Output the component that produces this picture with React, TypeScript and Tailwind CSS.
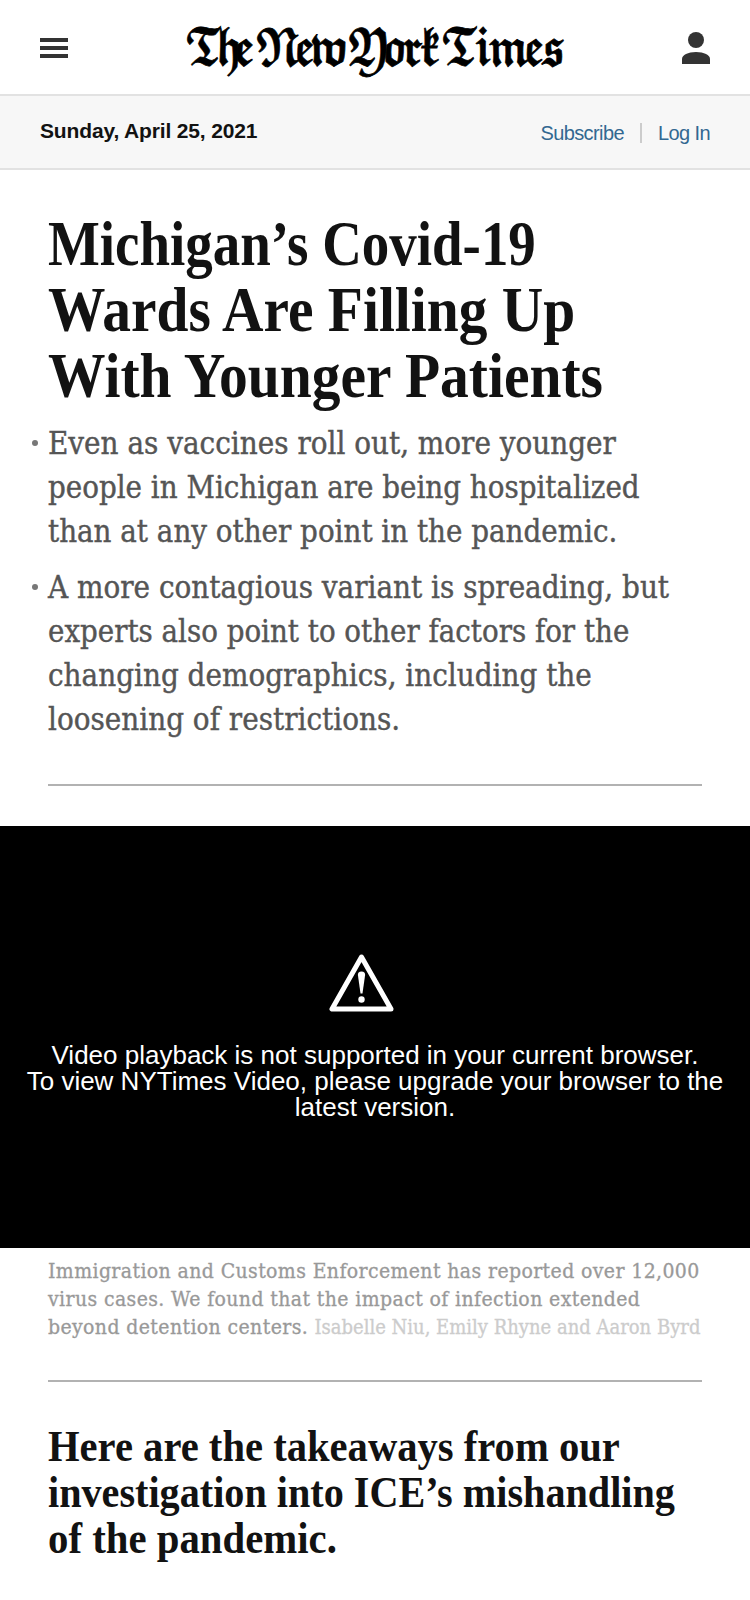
import type { ReactNode } from 'react';

function Line({ className = '', children }: { className?: string; children: ReactNode }) {
  return <span className={`block w-max origin-left whitespace-nowrap ${className}`}>{children}</span>;
}

function Masthead() {
  return (
    <header className="flex h-24 items-center justify-between border-b-2 border-[#e2e2e2] px-10 pt-0.5">
      <button aria-label="Sections" className="flex w-7 flex-col gap-1">
        <span className="h-1 bg-[#333]" />
        <span className="h-1 bg-[#333]" />
        <span className="h-1 bg-[#333]" />
      </button>
      <h1
        aria-label="The New York Times"
        className="flex w-[378px] -translate-x-[3px] scale-x-[0.8] justify-center pt-1.5 whitespace-nowrap font-['DejaVu_Math_TeX_Gyre','DejaVu_Serif','DejaVu_Sans',serif] text-[48px] leading-none tracking-[-8.5px] text-black [-webkit-text-stroke:0.8px_black]"
      >
        𝕿𝖍𝖊 𝕹𝖊𝖜 𝖄𝖔𝖗𝖐 𝕿𝖎𝖒𝖊𝖘
      </h1>
      <svg aria-label="Account" viewBox="0 0 28 32" className="h-8 w-7 fill-[#333]">
        <circle cx="14" cy="8" r="8" />
        <path d="M0 32v-5c0-4 6-7 14-7s14 3 14 7v5z" />
      </svg>
    </header>
  );
}

export default function App() {
  return (
    <div className="h-[1600px] w-[750px] overflow-hidden bg-white font-['Liberation_Serif',serif] text-[#121212]">
      <Masthead />
      <div className="flex h-[74px] items-center justify-between border-b-2 border-[#e2e2e2] bg-[#f7f7f7] px-10 font-['Liberation_Sans',sans-serif]">
        <time className="pb-0.5 text-[21px] font-bold tracking-[-0.15px]">Sunday, April 25, 2021</time>
        <nav className="flex items-center pt-0.5 text-[20px] text-[#326891]">
          <a className="tracking-[-0.6px]">Subscribe</a>
          <span className="mr-4 ml-4 h-5 w-0.5 bg-[#ccc]" />
          <a className="tracking-[-0.6px]">Log In</a>
        </nav>
      </div>

      <main>
        <article className="px-12 pt-[41px]">
          <h2 className="text-[63px] leading-[66px] font-bold">
            <Line className="scale-x-[0.872]">Michigan’s Covid-19</Line>
            <Line className="scale-x-[0.912]">Wards Are Filling Up</Line>
            <Line className="scale-x-[0.913]">With Younger Patients</Line>
          </h2>
          <ul className="mt-3 flex flex-col gap-3 font-['DejaVu_Serif_Condensed','DejaVu_Serif',serif] text-[31px] leading-[44px] text-[#555] [-webkit-text-stroke:0.4px_#555]">
            <li className="relative">
              <span className="absolute top-[19px] -left-4 size-1.5 rounded-full bg-[#777]" />
              <Line>Even as vaccines roll out, more younger</Line>
              <Line className="scale-x-[0.996]">people in Michigan are being hospitalized</Line>
              <Line className="scale-x-[0.996]">than at any other point in the pandemic.</Line>
            </li>
            <li className="relative">
              <span className="absolute top-[19px] -left-4 size-1.5 rounded-full bg-[#777]" />
              <Line>A more contagious variant is spreading, but</Line>
              <Line className="scale-x-[0.994]">experts also point to other factors for the</Line>
              <Line>changing demographics, including the</Line>
              <Line>loosening of restrictions.</Line>
            </li>
          </ul>
          <hr className="mt-[43px] border-t-2 border-[#b2b2b2]" />
        </article>

        <section className="mt-10 flex h-[422px] flex-col items-center bg-black pt-[127px] text-center font-['Liberation_Sans',sans-serif] text-[26px] leading-[26px] text-white">
          <svg viewBox="0 0 66 60" className="mr-7 h-[60px] w-[66px]">
            <path d="M33.5 4 4 56h59z" fill="none" stroke="white" strokeWidth="5" strokeLinejoin="round" />
            <path d="M33.5 18.5c-2.6 0-3.8 1.6-3.6 3.6l2.6 18.4h2l2.6-18.4c.2-2-1-3.6-3.6-3.6z" fill="white" />
            <circle cx="33.5" cy="46.5" r="3.2" fill="white" />
          </svg>
          <p className="mt-[29px]">
            Video playback is not supported in your current browser.
            <br />
            To view NYTimes Video, please upgrade your browser to the
            <br />
            latest version.
          </p>
        </section>

        <section className="px-12">
          <p className="pt-[9px] font-['DejaVu_Serif_Condensed','DejaVu_Serif',serif] text-[21px] leading-7 tracking-[0.39px] text-[#999] [-webkit-text-stroke:0.3px]">
            <Line>Immigration and Customs Enforcement has reported over 12,000</Line>
            <Line>virus cases. We found that the impact of infection extended</Line>
            <Line>
              beyond detention centers.{' '}
              <span className="text-[20px] tracking-normal text-[#ccc]">Isabelle Niu, Emily Rhyne and Aaron Byrd</span>
            </Line>
          </p>
          <hr className="mt-[39px] border-t-2 border-[#b2b2b2]" />
          <h3 className="mt-[42px] text-[44px] leading-[46px] font-bold">
            <Line className="scale-x-[0.923]">Here are the takeaways from our</Line>
            <Line className="scale-x-[0.913]">investigation into ICE’s mishandling</Line>
            <Line className="scale-x-[0.927]">of the pandemic.</Line>
          </h3>
        </section>
      </main>
    </div>
  );
}
